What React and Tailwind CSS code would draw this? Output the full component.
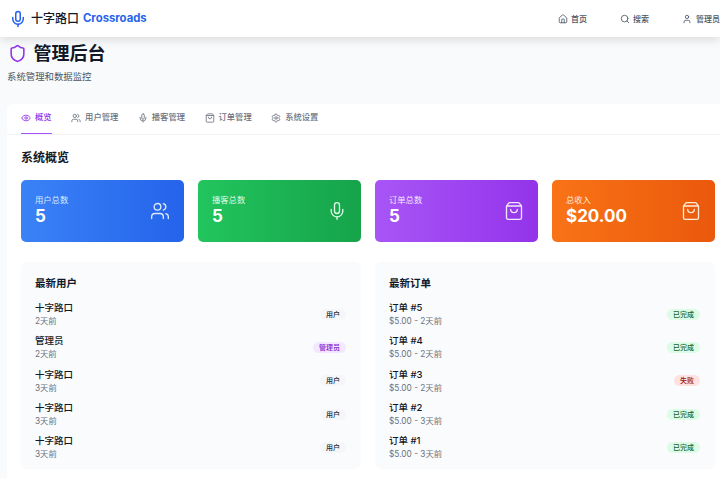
import React from "react";
import { Mic, Shield, Eye, Users, ShoppingBag, Settings, House, Search, User } from "lucide-react";

const tabs = [
	{ label: "概览", icon: Eye, active: true },
	{ label: "用户管理", icon: Users },
	{ label: "播客管理", icon: Mic },
	{ label: "订单管理", icon: ShoppingBag },
	{ label: "系统设置", icon: Settings },
];

const stats = [
	{ label: "用户总数", value: "5", icon: Users, bg: "from-[#3b82f6] to-[#2563eb]", text: "text-[#dbeafe]" },
	{ label: "播客总数", value: "5", icon: Mic, bg: "from-[#22c55e] to-[#16a34a]", text: "text-[#dcfce7]" },
	{ label: "订单总数", value: "5", icon: ShoppingBag, bg: "from-[#a855f7] to-[#9333ea]", text: "text-[#f3e8ff]" },
	{ label: "总收入", value: "$20.00", icon: ShoppingBag, bg: "from-[#f97316] to-[#ea580c]", text: "text-[#ffedd5]" },
];

const users = [
	{ name: "十字路口", time: "2天前", role: "用户" },
	{ name: "管理员", time: "2天前", role: "管理员", admin: true },
	{ name: "十字路口", time: "3天前", role: "用户" },
	{ name: "十字路口", time: "3天前", role: "用户" },
	{ name: "十字路口", time: "3天前", role: "用户" },
];

const orders = [
	{ name: "订单 #5", time: "$5.00 - 2天前", status: "已完成" },
	{ name: "订单 #4", time: "$5.00 - 2天前", status: "已完成" },
	{ name: "订单 #3", time: "$5.00 - 2天前", status: "失败", failed: true },
	{ name: "订单 #2", time: "$5.00 - 3天前", status: "已完成" },
	{ name: "订单 #1", time: "$5.00 - 3天前", status: "已完成" },
];

function Row({ title, sub, badge, badgeClass }) {
	return (
		<div className="flex h-[33.3px] items-center justify-between">
			<div>
				<p className="text-[9.5px] leading-[14px] font-medium text-[#111827]">{title}</p>
				<p className="text-[8.3px] leading-[12px] text-[#6b7280]">{sub}</p>
			</div>
			<span className={"mr-[1px] rounded-full px-[6px] text-[7px] leading-[11px] font-medium " + badgeClass}>
				{badge}
			</span>
		</div>
	);
}

function Panel({ title, children }) {
	return (
		<div className="rounded-[6px] bg-[#fafbfc] px-[14px] pt-[14px] pb-[5px]">
			<h3 className="mb-[5.5px] text-[10.5px] leading-[16px] font-semibold text-[#111827]">{title}</h3>
			{children}
		</div>
	);
}

export default function App() {
	return (
		<div
			className="h-[478px] w-[720px] overflow-hidden bg-[#f9fafb]"
			style={{ fontFamily: "Inter, 'Noto Sans CJK SC', sans-serif" }}>
			<header className="relative z-10 flex h-[37px] items-center justify-between bg-white pl-[9px] shadow-[0_2px_10px_rgba(0,0,0,0.14)]">
				<div className="flex items-center">
					<Mic className="h-[18px] w-[18px] text-[#2563eb]" strokeWidth={2} />
					<span className="ml-[4px] text-[12px] font-medium text-[#111827]">十字路口</span>
					<span className="ml-[4px] text-[11.3px] font-bold text-[#2563eb]">Crossroads</span>
				</div>
				<nav className="flex w-[162px] shrink-0 text-[8px] font-medium text-[#4b5563]">
					<span className="flex w-[62px] items-center gap-[3px]">
						<House className="h-[10px] w-[10px]" />
						首页
					</span>
					<span className="flex w-[62px] items-center gap-[3px]">
						<Search className="h-[10px] w-[10px]" />
						搜索
					</span>
					<span className="flex items-center gap-[4px] whitespace-nowrap">
						<User className="h-[10px] w-[10px]" />
						管理员
					</span>
				</nav>
			</header>

			<main className="px-[7px]">
				<div className="flex h-[33px] items-center gap-[7px] pl-[0.5px]">
					<Shield className="h-[19px] w-[19px] text-[#9333ea]" strokeWidth={2} />
					<h1 className="text-[18px] font-bold text-[#111827]">管理后台</h1>
				</div>
				<p className="text-[9.4px] leading-[13px] text-[#4b5563]">系统管理和数据监控</p>

				<div className="mt-[21px] w-[722px] rounded-t-[6px] bg-white pb-[40px]">
					<div className="flex h-[31px] gap-[19.5px] border-b border-[#f3f4f6] pl-[14px]">
						{tabs.map(tab => {
							const Icon = tab.icon;
							return (
								<div
									key={tab.label}
									className={
										"flex h-[30px] items-center gap-[4px] border-b pb-[2px] text-[8.3px] font-medium " +
										(tab.active
											? "border-[#a855f7] text-[#9333ea]"
											: "border-transparent text-[#6b7280]")
									}>
									<Icon className="h-[10px] w-[10px]" />
									{tab.label}
								</div>
							);
						})}
					</div>

					<div className="px-[14px] pt-[14px]">
						<h2 className="mb-[13px] text-[12px] leading-[18px] font-semibold text-[#111827]">系统概览</h2>
						<div className="grid grid-cols-4 gap-[14px]">
							{stats.map(stat => {
								const Icon = stat.icon;
								return (
									<div
										key={stat.label}
										className={
											"flex h-[62px] items-center justify-between rounded-[5px] bg-gradient-to-r px-[14px] " +
											stat.bg
										}>
										<div>
											<p className={"text-[8.3px] leading-[11px] " + stat.text}>{stat.label}</p>
											<p className="text-[17px] leading-[21px] font-bold text-white">{stat.value}</p>
										</div>
										<Icon className={"h-[20px] w-[20px] " + stat.text} strokeWidth={1.6} />
									</div>
								);
							})}
						</div>
						<div className="mt-[20px] grid grid-cols-2 gap-[14px]">
							<Panel title="最新用户">
								{users.map((u, i) => (
									<Row
										key={i}
										title={u.name}
										sub={u.time}
										badge={u.role}
										badgeClass={u.admin ? "bg-[#f3e8ff] text-[#7e22ce]" : "bg-[#f5f6f8] text-[#1f2937]"}
									/>
								))}
							</Panel>
							<Panel title="最新订单">
								{orders.map((o, i) => (
									<Row
										key={i}
										title={o.name}
										sub={o.time}
										badge={o.status}
										badgeClass={o.failed ? "bg-[#fee2e2] text-[#991b1b]" : "bg-[#dcfce7] text-[#166534]"}
									/>
								))}
							</Panel>
						</div>
					</div>
				</div>
			</main>
		</div>
	);
}
